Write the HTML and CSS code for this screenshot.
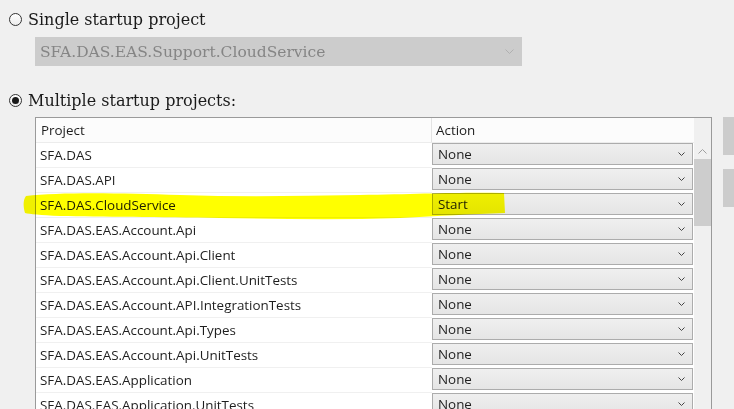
FILE: index.html
```html
<!DOCTYPE html>
<html>
<head>
<meta charset="utf-8">
<link rel="stylesheet" href="styles.css">
</head>
<body>
<div class="page">
  <div class="opt opt-single">
    <span class="radio"></span>
    <span class="opt-label">Single startup project</span>
  </div>
  <div class="combo-disabled">
    <span class="combo-text">SFA.DAS.EAS.Support.CloudService</span>
    <svg class="chev" width="9" height="5" viewBox="0 0 9 5"><polyline points="0.5,0.5 4.5,4.5 8.5,0.5" fill="none" stroke="#b0b0b0" stroke-width="1"/></svg>
  </div>
  <div class="opt opt-multi">
    <span class="radio checked"><span class="dot"></span></span>
    <span class="opt-label">Multiple startup projects:</span>
  </div>
  <div class="grid-wrap">
    <div class="grid">
      <div class="table">
        <div class="hdr">
          <div class="c-proj">Project</div>
          <div class="c-act">Action</div>
        </div>
        <div class="row"><div class="c-proj">SFA.DAS</div><div class="c-act"><div class="dd"><span>None</span><svg width="7" height="4" viewBox="0 0 7 4"><polyline points="0.5,0.5 3.5,3.5 6.5,0.5" fill="none" stroke="#444" stroke-width="1"/></svg></div></div></div>
        <div class="row"><div class="c-proj">SFA.DAS.API</div><div class="c-act"><div class="dd"><span>None</span><svg width="7" height="4" viewBox="0 0 7 4"><polyline points="0.5,0.5 3.5,3.5 6.5,0.5" fill="none" stroke="#444" stroke-width="1"/></svg></div></div></div>
        <div class="row"><div class="c-proj">SFA.DAS.CloudService</div><div class="c-act"><div class="dd"><span>Start</span><svg width="7" height="4" viewBox="0 0 7 4"><polyline points="0.5,0.5 3.5,3.5 6.5,0.5" fill="none" stroke="#444" stroke-width="1"/></svg></div></div></div>
        <div class="row"><div class="c-proj">SFA.DAS.EAS.Account.Api</div><div class="c-act"><div class="dd"><span>None</span><svg width="7" height="4" viewBox="0 0 7 4"><polyline points="0.5,0.5 3.5,3.5 6.5,0.5" fill="none" stroke="#444" stroke-width="1"/></svg></div></div></div>
        <div class="row"><div class="c-proj">SFA.DAS.EAS.Account.Api.Client</div><div class="c-act"><div class="dd"><span>None</span><svg width="7" height="4" viewBox="0 0 7 4"><polyline points="0.5,0.5 3.5,3.5 6.5,0.5" fill="none" stroke="#444" stroke-width="1"/></svg></div></div></div>
        <div class="row"><div class="c-proj">SFA.DAS.EAS.Account.Api.Client.UnitTests</div><div class="c-act"><div class="dd"><span>None</span><svg width="7" height="4" viewBox="0 0 7 4"><polyline points="0.5,0.5 3.5,3.5 6.5,0.5" fill="none" stroke="#444" stroke-width="1"/></svg></div></div></div>
        <div class="row"><div class="c-proj">SFA.DAS.EAS.Account.API.IntegrationTests</div><div class="c-act"><div class="dd"><span>None</span><svg width="7" height="4" viewBox="0 0 7 4"><polyline points="0.5,0.5 3.5,3.5 6.5,0.5" fill="none" stroke="#444" stroke-width="1"/></svg></div></div></div>
        <div class="row"><div class="c-proj">SFA.DAS.EAS.Account.Api.Types</div><div class="c-act"><div class="dd"><span>None</span><svg width="7" height="4" viewBox="0 0 7 4"><polyline points="0.5,0.5 3.5,3.5 6.5,0.5" fill="none" stroke="#444" stroke-width="1"/></svg></div></div></div>
        <div class="row"><div class="c-proj">SFA.DAS.EAS.Account.Api.UnitTests</div><div class="c-act"><div class="dd"><span>None</span><svg width="7" height="4" viewBox="0 0 7 4"><polyline points="0.5,0.5 3.5,3.5 6.5,0.5" fill="none" stroke="#444" stroke-width="1"/></svg></div></div></div>
        <div class="row"><div class="c-proj">SFA.DAS.EAS.Application</div><div class="c-act"><div class="dd"><span>None</span><svg width="7" height="4" viewBox="0 0 7 4"><polyline points="0.5,0.5 3.5,3.5 6.5,0.5" fill="none" stroke="#444" stroke-width="1"/></svg></div></div></div>
        <div class="row"><div class="c-proj">SFA.DAS.EAS.Application.UnitTests</div><div class="c-act"><div class="dd"><span>None</span><svg width="7" height="4" viewBox="0 0 7 4"><polyline points="0.5,0.5 3.5,3.5 6.5,0.5" fill="none" stroke="#444" stroke-width="1"/></svg></div></div></div>
      </div>
      <div class="vscroll">
        <svg class="up" width="9" height="5" viewBox="0 0 9 5"><polyline points="0.5,4.5 4.5,0.5 8.5,4.5" fill="none" stroke="#a0a0a0" stroke-width="1"/></svg>
        <div class="thumb"></div>
      </div>
    </div>
    <div class="side-btns">
      <div class="sbtn"></div>
      <div class="sbtn"></div>
    </div>
  </div>
  <svg class="highlight" width="734" height="409" viewBox="0 0 734 409">
    <path d="M26,196 C60,192 120,193 180,195 C240,197 300,196 360,195 C420,194 460,192 504,193 L505,213 C470,214 440,216 400,218 C340,220 280,219 220,218 C160,217 100,217 60,216 C40,215 30,214 25,213 C23,206 23,200 26,196 Z" fill="#ffff00"/>
  </svg>
</div>
</body>
</html>
```
FILE: styles.css
```css
html, body {
  margin: 0;
  padding: 0;
  background: #f0f0f0;
}
.page {
  position: relative;
  width: 734px;
  height: 409px;
  overflow: hidden;
}
.opt {
  display: flex;
  align-items: center;
  padding-left: 9px;
  height: 20px;
}
.opt-single {
  margin-top: 9px;
}
.opt-multi {
  margin-top: 24px;
}
.radio {
  width: 11px;
  height: 11px;
  border: 1px solid #333;
  border-radius: 50%;
  background: linear-gradient(#ffffff, #ececec);
  display: flex;
  align-items: center;
  justify-content: center;
  flex: none;
}
.dot {
  width: 7px;
  height: 7px;
  border-radius: 50%;
  background: #1a1a1a;
}
.opt-label {
  margin-left: 6px;
  font-family: "DejaVu Serif", serif;
  font-size: 16px;
  color: #1a1a1a;
}
.combo-disabled {
  margin-left: 35px;
  margin-top: 8px;
  width: 487px;
  height: 29px;
  background: #cccccc;
  display: flex;
  align-items: center;
  justify-content: space-between;
  padding: 0 8px 0 5px;
  box-sizing: border-box;
}
.combo-text {
  font-family: "DejaVu Serif", serif;
  font-size: 15.5px;
  color: #858585;
}
.grid-wrap {
  display: flex;
  margin-top: 7px;
  margin-left: 35px;
}
.grid {
  display: flex;
  flex: none;
  width: 677px;
  height: 300px;
  border: 1px solid #9a9a9a;
  border-bottom: none;
  box-sizing: border-box;
  background: #fff;
}
.table {
  flex: 1;
  font-family: "Open Sans", sans-serif;
  font-size: 13.4px;
  color: #1e1e1e;
}
.hdr {
  display: flex;
  height: 24px;
  background: #fcfcfc;
  border-bottom: 1px solid #ececec;
}
.hdr .c-proj {
  width: 396px;
  box-sizing: border-box;
  padding-left: 5px;
  border-right: 1px solid #e3e3e3;
  display: flex;
  align-items: center;
}
.hdr .c-act {
  flex: 1;
  padding-left: 4px;
  display: flex;
  align-items: center;
}
.row {
  display: flex;
  height: 25px;
}
.row .c-proj {
  width: 396px;
  padding-left: 4px;
  display: flex;
  align-items: center;
  border-bottom: 1px solid #f0f0f0;
  box-sizing: border-box;
}
.row .c-act {
  flex: 1;
  padding-right: 1px;
}
.dd {
  height: 22px;
  box-sizing: border-box;
  border: 1px solid #acacac;
  background: linear-gradient(#efefef, #e5e5e5);
  display: flex;
  align-items: center;
  justify-content: space-between;
  padding: 0 7px 0 5px;
}
.vscroll {
  width: 17px;
  flex: none;
  background: #f0f0f0;
  display: flex;
  flex-direction: column;
  align-items: center;
  padding-top: 31px;
  box-sizing: border-box;
}
.up {
  display: block;
}
.thumb {
  margin-top: 5px;
  width: 17px;
  height: 67px;
  background: #cdcdcd;
}
.side-btns {
  display: flex;
  flex-direction: column;
  gap: 14px;
  margin-left: 11px;
  flex: none;
}
.sbtn {
  width: 20px;
  height: 38px;
  background: #cccccc;
}
.highlight {
  position: absolute;
  left: 0;
  top: 0;
  mix-blend-mode: multiply;
  pointer-events: none;
}
```
